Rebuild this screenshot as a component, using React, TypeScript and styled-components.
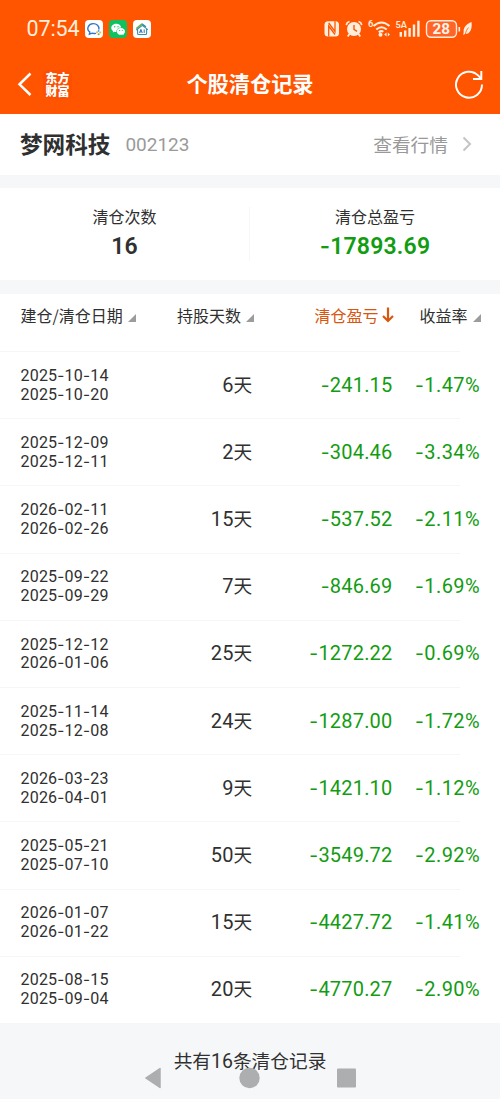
import React from "react";
import styled, { createGlobalStyle } from "styled-components";

const latin = `Roboto, "Noto Sans CJK SC", sans-serif`;
const cjk = `"Noto Sans CJK SC", "Noto Sans", sans-serif`;

const GlobalStyle = createGlobalStyle`
  * { box-sizing: border-box; }
  body { margin: 0; background: #f6f7f9; color: #303030; font-family: ${cjk}; }
`;

const Screen = styled.div`
  width: 500px;
  height: 1099px;
  display: flex;
  flex-direction: column;
  overflow: hidden;
  position: relative;
`;

const Top = styled.header`
  height: 114px;
  flex: none;
  background: #ff5400;
  color: #fff;
`;

const StatusBar = styled.div`
  height: 56px;
  display: flex;
  align-items: center;
  padding: 2px 26px 0 26.5px;
  color: #ffeedd;
`;

const Clock = styled.span`
  font: 400 21.5px/30px ${latin};
  letter-spacing: -0.1px;
  width: 58.5px;
  white-space: nowrap;
`;

const AppBadges = styled.div`
  display: flex;
  gap: 6px;
  flex: 1;
  padding-bottom: 1px;
`;

const NavBar = styled.div`
  height: 58px;
  display: grid;
  grid-template-columns: 100px 1fr 100px;
  align-items: center;
  padding-bottom: 2px;
`;

const NavLeft = styled.div`
  display: flex;
  align-items: center;
  padding-left: 17px;
  gap: 10px;
`;

const Brand = styled.div`
  width: 29px;
  padding: 1px 0 2px;
  border-radius: 6px;
  background: #fd4f03;
  text-align: center;
  white-space: nowrap;
  font: 900 12px/13px ${cjk};
`;

const Title = styled.h1`
  margin: 0;
  text-align: center;
  font: 700 21.2px/30px ${cjk};
  padding-bottom: 3px;
`;

const NavRight = styled.div`
  display: flex;
  justify-content: flex-end;
  padding-right: 15px;
`;

const StockRow = styled.section`
  height: 61px;
  flex: none;
  background: #fff;
  display: flex;
  align-items: center;
  padding: 0 28px 2px 20px;
`;

const StockName = styled.strong`
  font: 700 22.6px/32px ${cjk};
`;

const StockCode = styled.span`
  margin-left: 15px;
  flex: 1;
  font: 400 19px/28px ${latin};
  padding-top: 2px;
  color: #9a9a9a;
`;

const Link = styled.span`
  font: 400 18.7px/28px ${cjk};
  color: #999;
  margin-right: 14px;
`;

const Summary = styled.section`
  margin-top: 13px;
  height: 92px;
  flex: none;
  background: #fff;
  display: grid;
  grid-template-columns: 1fr 1fr;
  align-items: center;
`;

const Metric = styled.div<{ $divided?: boolean }>`
  height: 54px;
  display: flex;
  flex-direction: column;
  align-items: center;
  border-right: ${(p) => (p.$divided ? "1px solid #f6f6f6" : "0")};
`;

const MetricLabel = styled.span`
  margin-top: -2px;
  font: 400 16px/22px ${cjk};
`;

const MetricValue = styled.span<{ $loss?: boolean }>`
  font: 600 23px/30px ${latin};
  margin-top: 5px;
  letter-spacing: 0.2px;
  white-space: nowrap;
  color: ${(p) => (p.$loss ? "#129c12" : "#303030")};
`;

const Table = styled.section`
  margin-top: 14px;
  flex: none;
  background: #fff;
`;

const HeadRow = styled.div`
  height: 57px;
  display: flex;
  align-items: flex-start;
  padding: 9px 0 0 20.5px;
`;

const HeadCell = styled.div<{ $width: number; $active?: boolean }>`
  width: ${(p) => p.$width}px;
  display: flex;
  align-items: center;
  gap: ${(p) => (p.$active ? 3 : 5)}px;
  white-space: nowrap;
  font: 400 16px/24px ${cjk};
  color: ${(p) => (p.$active ? "#d8560f" : "#303030")};
`;

const SortTriangle = styled.svg`
  margin-top: 5px;
`;

const Row = styled.div`
  height: 67.2px;
  display: grid;
  grid-template-columns: 130px 102px 140px 87.5px;
  align-items: center;
  padding-left: 20.5px;
  background: linear-gradient(#f6f6f6, #f6f6f6) 0 0 / 460px 1px no-repeat;
`;

const Dates = styled.div`
  font: 400 16px/18.8px ${latin};
  letter-spacing: 0.2px;
  white-space: nowrap;
  padding-top: 2px;
`;

const DateLine = styled.div``;

const Cell = styled.div<{ $loss?: boolean; $spacing?: number }>`
  font: 400 20px/28px ${latin};
  letter-spacing: ${(p) => p.$spacing ?? 0.2}px;
  text-align: right;
  white-space: nowrap;
  color: ${(p) => (p.$loss ? "#129c12" : "#303030")};
`;

const Unit = styled.span`
  font: 400 18.7px/20px ${cjk};
`;

const Dash = styled.span`
  font-family: Inter, sans-serif;
  font-size: 0.96em;
  line-height: 1;
`;

const Footer = styled.footer`
  flex: 1;
  padding-top: 23px;
  text-align: center;
  font: 400 18.7px/28px ${cjk};
`;

const FooterCount = styled.span`
  font: 400 19.5px/20px ${latin};
`;

const SystemNav = styled.nav`
  position: absolute;
  left: 144px;
  right: 144px;
  bottom: 10px;
  height: 22px;
  display: flex;
  align-items: center;
  justify-content: space-between;
`;

const Figures = ({ text }: { text: string }) => (
  <>
    {text.split(/(-)/).map((part, i) => (part === "-" ? <Dash key={i}>-</Dash> : part))}
  </>
);

const SortMark = () => (
  <SortTriangle width="8" height="8" viewBox="0 0 8 8">
    <path d="M8 0V8H0Z" fill="#9c9c9c" />
  </SortTriangle>
);

const records: [string, string, number, string, string][] = [
  ["2025-10-14", "2025-10-20", 6, "-241.15", "-1.47%"],
  ["2025-12-09", "2025-12-11", 2, "-304.46", "-3.34%"],
  ["2026-02-11", "2026-02-26", 15, "-537.52", "-2.11%"],
  ["2025-09-22", "2025-09-29", 7, "-846.69", "-1.69%"],
  ["2025-12-12", "2026-01-06", 25, "-1272.22", "-0.69%"],
  ["2025-11-14", "2025-12-08", 24, "-1287.00", "-1.72%"],
  ["2026-03-23", "2026-04-01", 9, "-1421.10", "-1.12%"],
  ["2025-05-21", "2025-07-10", 50, "-3549.72", "-2.92%"],
  ["2026-01-07", "2026-01-22", 15, "-4427.72", "-1.41%"],
  ["2025-08-15", "2025-09-04", 20, "-4770.27", "-2.90%"],
];

const Badges = () => (
  <AppBadges>
    <svg width="18" height="18" viewBox="0 0 18 18">
      <rect width="18" height="18" rx="4" fill="#fff" />
      <path d="M10.500 13.400c-1.200.3-2.300.2-3.400-.2L4.400 14.200l.4-2.200C.8 9 3.500 3.600 8.200 3.600c3.600 0 6.100 2.500 5.700 5.400" fill="none" stroke="#2f74c8" strokeWidth="1.400" strokeLinecap="round" />
      <circle cx="12" cy="12.300" r="1" fill="#f5b53a" />
      <circle cx="15.200" cy="12.600" r="1" fill="#f5b53a" />
      <circle cx="13.600" cy="14.300" r="1" fill="#65b84b" />
      <circle cx="13.600" cy="10.900" r=".9" fill="#2f9be0" />
    </svg>
    <svg width="18" height="18" viewBox="0 0 18 18">
      <rect width="18" height="18" rx="4" fill="#10c25f" />
      <path d="M7.300 3.800c-2.800 0-5 1.800-5 4.100 0 1.300.7 2.400 1.800 3.200l-.4 1.500 1.800-.9c.6.2 1.200.3 1.800.3 0-3 2.200-4.700 5-4.600-.4-2.100-2.500-3.600-5-3.600Z" fill="#fff" />
      <path d="M11.900 8c-2.300 0-4.100 1.500-4.100 3.400s1.800 3.400 4.100 3.400c.5 0 1-.1 1.500-.2l1.400.7-.4-1.200c1-.7 1.600-1.600 1.600-2.700C16 9.500 14.200 8 11.900 8Z" fill="#fff" />
      <g fill="#10c25f">
        <circle cx="5.700" cy="6.800" r=".7" />
        <circle cx="9" cy="6.800" r=".7" />
        <circle cx="10.600" cy="10.500" r=".6" />
        <circle cx="13.300" cy="10.500" r=".6" />
      </g>
    </svg>
    <svg width="18" height="18" viewBox="0 0 18 18">
      <rect width="18" height="18" rx="4" fill="#fff" />
      <path d="M3.300 8.600 9 3.800" fill="none" stroke="#6cb64a" strokeWidth="1.600" />
      <path d="M4.600 9.200v4.300c0 .6.400 1 1 1h7c.6 0 1-.4 1-1V9M3.300 10 9.300 5.400 14.800 9.600M9 3.800l4 3" fill="none" stroke="#3b8fa4" strokeWidth="1.100" />
      <path d="m6.500 12.900 1.400-3.500 1.400 3.500M7 11.900h1.800M11.200 9.400v3.500" fill="none" stroke="#2a76b6" strokeWidth="1" />
    </svg>
  </AppBadges>
);

const SystemIcons = () => (
  <svg width="152" height="24" viewBox="322 17 152 24" fill="none" stroke="#ffeedd">
    {/* NFC */}
    <rect x="324.500" y="21.300" width="14.500" height="15.200" rx="3.500" fill="#ffeedd" stroke="none" />
    <path d="M328.700 36.500V26L335 34.500M335 21.300V31.500L328.700 23" stroke="#ff5400" strokeWidth="1.300" />
    {/* alarm */}
    <circle cx="354" cy="29" r="7" fill="#ffeedd" stroke="none" />
    <path d="m346.300 25.200q.3-3 3.200-3.800M361.700 25.200q-.3-3-3.200-3.800" strokeWidth="1.600" />
    <path d="M349.500 34 347.700 36.500M358.500 34l1.800 2.500" strokeWidth="1.800" />
    <path d="M354 25v4.300l3 2" stroke="#ff5400" strokeWidth="1.400" />
    {/* wifi */}
    <path d="M373.500 26q8-7 16 0M376.300 29.500q5.200-4.500 10.400 0M378.800 32.300q2.700-2 4.500-.5" strokeWidth="2.100" />
    <circle cx="380.500" cy="34.700" r="2" fill="#ffeedd" stroke="none" />
    <path d="M386.600 32.500v4L384.200 34.500ZM387.800 32.500v4l2.200-2Z" fill="#ffeedd" stroke="none" />
    <text x="368" y="27" fontFamily="Roboto" fontSize="9.500" fontWeight="600" fill="#ffeedd" stroke="none">6</text>
    {/* cellular */}
    <text x="395.500" y="28" fontFamily="Roboto" fontSize="9.500" fontWeight="600" fill="#ffeedd" stroke="none" textLength="11.500" lengthAdjust="spacingAndGlyphs">5A</text>
    <path d="M400.800 32v4.800M405.200 30.500v6.300M409.600 28v8.800M414 24.500v12.300M418.400 20.800v16" strokeWidth="2.400" />
    {/* battery */}
    <rect x="426.500" y="20.700" width="30" height="16.500" rx="4.500" strokeWidth="1.400" fill="#ff6428" />
    <path d="M459.300 27v4.500" strokeWidth="1.600" />
    <text x="441.300" y="34" textAnchor="middle" fontFamily="Roboto" fontSize="14.500" fontWeight="700" fill="#fff3e8" stroke="none" textLength="17.500" lengthAdjust="spacingAndGlyphs">28</text>
    {/* power saving leaf */}
    <path d="M471.500 22c-5 2.200-8.300 5-7.800 10l-.5 3 1.800-1c4.700.4 7.500-4.500 6.500-12Z" fill="#ffeedd" stroke="none" />
    <path d="M465.300 34.500c.5-3 1.600-5 3.200-7" stroke="#ff5400" strokeWidth=".8" />
  </svg>
);

export default function App() {
  return (
    <Screen>
      <GlobalStyle />
      <Top>
        <StatusBar>
          <Clock>07:54</Clock>
          <Badges />
          <SystemIcons />
        </StatusBar>
        <NavBar>
          <NavLeft>
            <svg width="16" height="26" viewBox="0 0 16 26" fill="none" stroke="#fff" strokeWidth="2.500">
              <path d="M13.500 2.500 2.500 13.300 13.500 24" />
            </svg>
            <Brand>
              东方
              <br />
              财富
            </Brand>
          </NavLeft>
          <Title>个股清仓记录</Title>
          <NavRight>
            <svg width="32" height="32" viewBox="0 0 32 32" fill="none" stroke="#fff" strokeWidth="2">
              <path d="M29 16.500A13 13 0 1 1 25.300 7.600L28 10.500" />
              <path d="M28.300 3V11H20" />
            </svg>
          </NavRight>
        </NavBar>
      </Top>

      <StockRow>
        <StockName>梦网科技</StockName>
        <StockCode>002123</StockCode>
        <Link>查看行情</Link>
        <svg width="10" height="16" viewBox="0 0 10 16" fill="none" stroke="#c4c4c4" strokeWidth="2">
          <path d="m1.500 1.500 6.500 6.500-6.500 6.500" />
        </svg>
      </StockRow>

      <Summary>
        <Metric $divided>
          <MetricLabel>清仓次数</MetricLabel>
          <MetricValue>16</MetricValue>
        </Metric>
        <Metric>
          <MetricLabel>清仓总盈亏</MetricLabel>
          <MetricValue $loss>
            <Figures text="-17893.69" />
          </MetricValue>
        </Metric>
      </Summary>

      <Table>
        <HeadRow>
          <HeadCell $width={156.5}>
            建仓/清仓日期
            <SortMark />
          </HeadCell>
          <HeadCell $width={137.5}>
            持股天数
            <SortMark />
          </HeadCell>
          <HeadCell $width={105} $active>
            清仓盈亏
            <svg width="12" height="16" viewBox="0 0 12 16" fill="none" stroke="#d8560f" strokeWidth="2.200">
              <path d="M6 .5V14M1 9l5 5 5-5" />
            </svg>
          </HeadCell>
          <HeadCell $width={70}>
            收益率
            <SortMark />
          </HeadCell>
        </HeadRow>
        {records.map(([opened, closed, days, profit, rate]) => (
          <Row key={opened}>
            <Dates>
              <DateLine>
                <Figures text={opened} />
              </DateLine>
              <DateLine>
                <Figures text={closed} />
              </DateLine>
            </Dates>
            <Cell>
              {days}
              <Unit>天</Unit>
            </Cell>
            <Cell $loss>
              <Figures text={profit} />
            </Cell>
            <Cell $loss $spacing={0.4}>
              <Figures text={rate} />
            </Cell>
          </Row>
        ))}
      </Table>

      <Footer>
        共有<FooterCount>16</FooterCount>条清仓记录
      </Footer>

      <SystemNav>
        <svg width="18" height="22" viewBox="0 0 18 22">
          <path d="M16 1.500v19L1.800 11Z" fill="#adaeb0" stroke="#adaeb0" strokeWidth="1.500" strokeLinejoin="round" />
        </svg>
        <svg width="21" height="22" viewBox="0 0 21 22">
          <circle cx="10.500" cy="11" r="10.200" fill="#adaeb0" />
        </svg>
        <svg width="19" height="22" viewBox="0 0 19 22">
          <rect y="1.500" width="19" height="19" rx="1" fill="#adaeb0" />
        </svg>
      </SystemNav>
    </Screen>
  );
}
